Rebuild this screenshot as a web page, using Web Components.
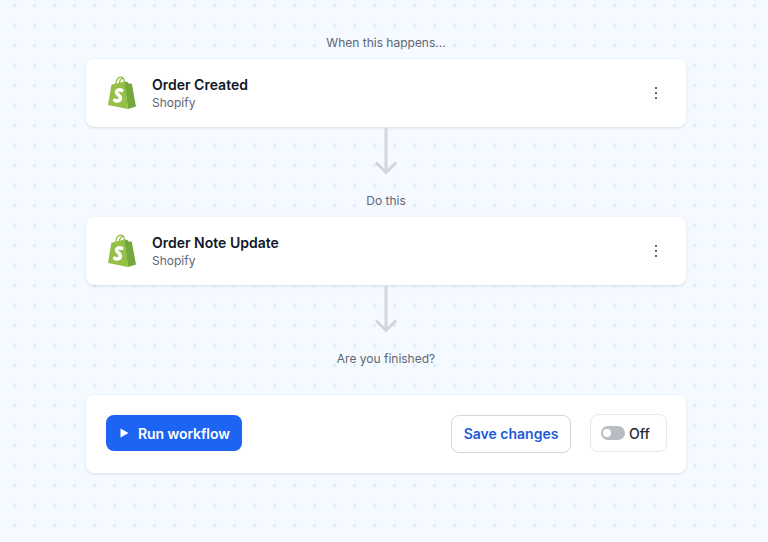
<!DOCTYPE html>
<html lang="en">
<head>
<meta charset="utf-8">
<title>Workflow</title>
<style>
  html, body { margin: 0; height: 100%; }
  body { font-family: Inter, "Liberation Sans", sans-serif; }
</style>
</head>
<body>
<workflow-canvas>
  <step-label>When this happens...</step-label>
  <step-card title="Order Created" app="Shopify"></step-card>
  <step-arrow></step-arrow>
  <step-label>Do this</step-label>
  <step-card title="Order Note Update" app="Shopify"></step-card>
  <step-arrow></step-arrow>
  <step-label>Are you finished?</step-label>
  <finish-bar></finish-bar>
</workflow-canvas>
<script>
class WorkflowCanvas extends HTMLElement {
  constructor() {
    super();
    this.attachShadow({ mode: "open" });
    this.shadowRoot.innerHTML = `
      <style>
        :host {
          display: flex;
          flex-direction: column;
          box-sizing: border-box;
          width: 768px;
          height: 542px;
          overflow: hidden;
          padding: 33px 82px 0 86px;
          background-color: #f4faff;
          background-image: radial-gradient(circle at 14.5px 5.5px, #e1eefc 1.6px, transparent 2.2px);
          background-size: 20px 20px;
        }
      </style>
      <slot></slot>`;
  }
}

class StepLabel extends HTMLElement {
  constructor() {
    super();
    this.attachShadow({ mode: "open" });
    this.shadowRoot.innerHTML = `
      <style>
        :host {
          display: block;
          height: 20px;
          margin-bottom: 6px;
          text-align: center;
          font-size: 12px;
          line-height: 20px;
          color: #5f6675;
        }
      </style>
      <slot></slot>`;
  }
}

class StepCard extends HTMLElement {
  constructor() {
    super();
    this.attachShadow({ mode: "open" });
    this.shadowRoot.innerHTML = `
      <style>
        :host {
          display: flex;
          align-items: center;
          box-sizing: border-box;
          height: 68px;
          padding: 0 22px 0 21px;
          background: #fff;
          border-radius: 8px;
          box-shadow: 0 1px 3px rgba(30, 50, 80, 0.14);
        }
        svg.logo { width: 30px; height: 34px; flex: none; margin-right: 15px; }
        .text { flex: 1; padding-top: 2px; }
        .title { font-size: 14px; font-weight: 600; line-height: 18px; color: #111827; }
        .app { font-size: 12px; line-height: 18px; color: #5f6675; }
        svg.more { width: 16px; height: 16px; flex: none; }
      </style>
      <svg class="logo" viewBox="0 0 30 34">
        <path fill="none" stroke="#95bf47" stroke-width="1.300" d="M8.500 9C9 4.200 11 1.200 14 1.200c2 0 3.300 2 3.300 5.300M12 8.200C12.500 5.200 14 2.800 16 2.200"/>
        <path fill="#95bf47" d="M1 29 4.300 9.300c.1-.5.3-.8.800-.9L17.500 5.500 21 33z"/>
        <path fill="#74a83c" d="M17.300 5.500l3.200.600 1 1.300 2.700.200c.4 0 .6.300.7.600L29 30.500 21 33z"/>
        <path fill="none" stroke="#fff" stroke-width="3.600" stroke-linecap="round" d="M14.800 14.300c-1.500-.7-5-.8-5.300 1.700-.3 2.700 4.300 3 3.900 6.200-.4 3-3.800 3.400-5.700 2"/>
      </svg>
      <div class="text">
        <div class="title"></div>
        <div class="app"></div>
      </div>
      <svg class="more" viewBox="0 0 16 16" fill="#5f6675">
        <rect x="7" y="2" width="2" height="2"/>
        <rect x="7" y="7" width="2" height="2"/>
        <rect x="7" y="12" width="2" height="2"/>
      </svg>`;
  }

  connectedCallback() {
    this.shadowRoot.querySelector(".title").textContent = this.getAttribute("title");
    this.shadowRoot.querySelector(".app").textContent = this.getAttribute("app");
  }
}

class StepArrow extends HTMLElement {
  constructor() {
    super();
    this.attachShadow({ mode: "open" });
    this.shadowRoot.innerHTML = `
      <style>
        :host { display: flex; justify-content: center; height: 64px; }
        svg { width: 24px; height: 48px; }
      </style>
      <svg viewBox="0 0 24 48" fill="none" stroke="#d4d6d9" stroke-width="3">
        <path d="M12 1V45.500"/>
        <path d="M2 35.500 12 45.500 22 35.500"/>
      </svg>`;
  }
}

class RunButton extends HTMLElement {
  constructor() {
    super();
    this.attachShadow({ mode: "open" });
    this.shadowRoot.innerHTML = `
      <style>
        :host {
          display: inline-flex;
          align-items: center;
          box-sizing: border-box;
          width: 136px;
          height: 36px;
          padding-left: 14px;
          background: #1d64f2;
          border-radius: 8px;
          color: #fff;
          font-size: 14px;
          font-weight: 600;
          letter-spacing: -0.08px;
        }
        svg { width: 9px; height: 10px; margin-right: 9px; }
      </style>
      <svg viewBox="0 0 9 10"><path fill="#fff" d="M0.500 0.500 8.500 5 0.500 9.500z"/></svg>
      <slot></slot>`;
  }
}

class SaveButton extends HTMLElement {
  constructor() {
    super();
    this.attachShadow({ mode: "open" });
    this.shadowRoot.innerHTML = `
      <style>
        :host {
          display: inline-flex;
          align-items: center;
          justify-content: center;
          box-sizing: border-box;
          width: 120px;
          height: 38px;
          padding-bottom: 1px;
          background: #fff;
          border: 1px solid #d3d6df;
          border-radius: 8px;
          color: #1d5bdb;
          font-size: 14px;
          font-weight: 600;
        }
      </style>
      <slot></slot>`;
  }
}

class OffToggle extends HTMLElement {
  constructor() {
    super();
    this.attachShadow({ mode: "open" });
    this.shadowRoot.innerHTML = `
      <style>
        :host {
          display: inline-flex;
          align-items: center;
          gap: 4px;
          box-sizing: border-box;
          width: 77px;
          height: 38px;
          padding-left: 10px;
          background: #fff;
          border: 1px solid #e6e8ec;
          border-radius: 8px;
          color: #1f2937;
          font-size: 14px;
          font-weight: 500;
        }
        .track {
          display: flex;
          align-items: center;
          box-sizing: border-box;
          width: 24px;
          height: 14px;
          padding-left: 2px;
          background: #b9bcc2;
          border-radius: 7px;
        }
        .knob { width: 8px; height: 8px; background: #fff; border-radius: 50%; }
      </style>
      <span class="track"><span class="knob"></span></span>
      <slot></slot>`;
  }
}

class FinishBar extends HTMLElement {
  constructor() {
    super();
    this.attachShadow({ mode: "open" });
    this.shadowRoot.innerHTML = `
      <style>
        :host {
          display: flex;
          box-sizing: border-box;
          height: 78px;
          margin-top: 20px;
          padding: 20px 19px 0 20px;
          background: #fff;
          border-radius: 8px;
          box-shadow: 0 1px 3px rgba(30, 50, 80, 0.14);
        }
        run-button { margin-right: auto; }
        off-toggle { margin: -1px 0 0 19px; }
      </style>
      <run-button>Run workflow</run-button>
      <save-button>Save changes</save-button>
      <off-toggle>Off</off-toggle>`;
  }
}

customElements.define("workflow-canvas", WorkflowCanvas);
customElements.define("step-label", StepLabel);
customElements.define("step-card", StepCard);
customElements.define("step-arrow", StepArrow);
customElements.define("run-button", RunButton);
customElements.define("save-button", SaveButton);
customElements.define("off-toggle", OffToggle);
customElements.define("finish-bar", FinishBar);
</script>
</body>
</html>
